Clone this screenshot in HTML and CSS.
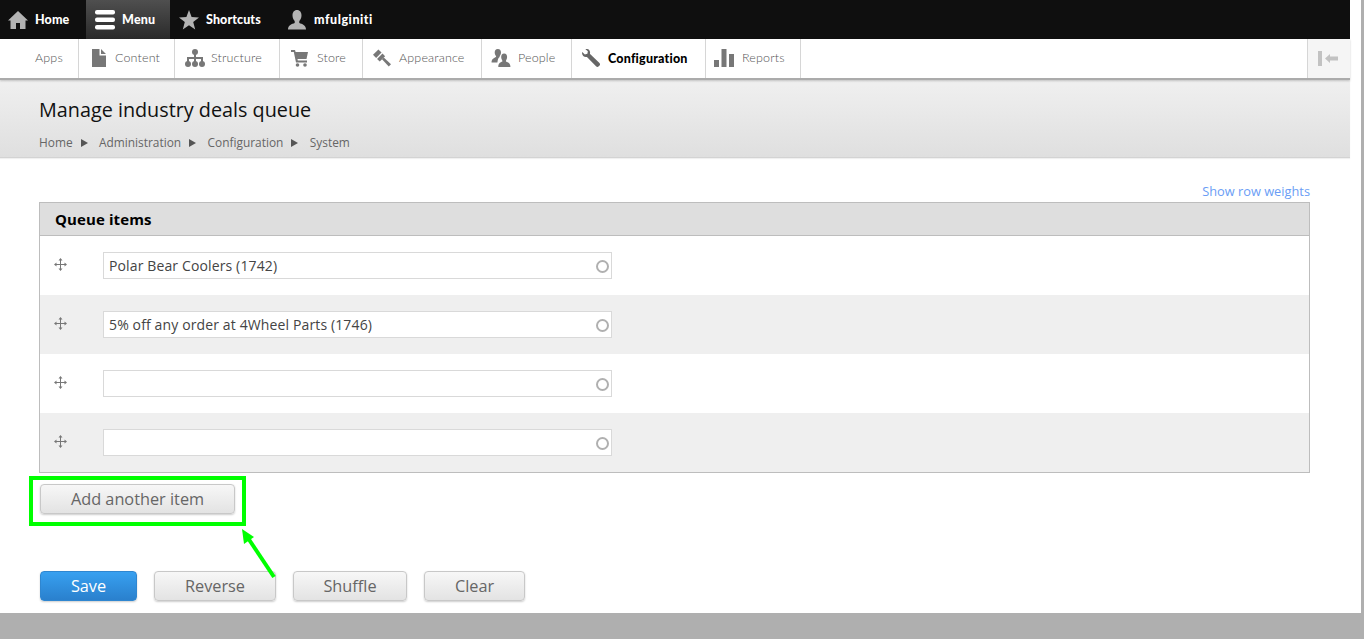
FILE: index.html
```html
<!DOCTYPE html>
<html lang="en">
<head>
<meta charset="utf-8">
<title>Manage industry deals queue</title>
<link rel="stylesheet" href="styles.css">
</head>
<body>
<div class="page">
  <div class="content">
    <nav class="topbar">
      <a class="top-item top-home"><svg class="top-icon" viewBox="0 0 20 20"><path d="M10 1 L20 10.5 L17.5 10.5 L17.5 19 L12 19 L12 13 L8 13 L8 19 L2.5 19 L2.5 10.5 L0 10.5 Z"/></svg>Home</a>
      <a class="top-item top-menu"><svg class="top-icon" viewBox="0 0 20 20"><rect y="0" width="20" height="4.500" rx="2" fill="#fff"/><rect y="7.500" width="20" height="4.500" rx="2" fill="#fff"/><rect y="15" width="20" height="4.500" rx="2" fill="#fff"/></svg>Menu</a>
      <a class="top-item top-shortcuts"><svg class="top-icon" viewBox="0 0 20 20"><path d="M10 0 L12.6 7 L20 7.4 L14.2 12 L16.2 19.5 L10 15.3 L3.8 19.5 L5.8 12 L0 7.4 L7.4 7 Z"/></svg>Shortcuts</a>
      <a class="top-item top-user"><svg class="top-icon" viewBox="0 0 20 20"><path d="M10 0 C13 0 14.5 2.4 14.5 5.5 C14.5 8 13.4 10 12.3 11 L12.3 13 C15 14 19 15 19 19.5 L1 19.5 C1 15 5 14 7.7 13 L7.7 11 C6.6 10 5.5 8 5.5 5.5 C5.5 2.4 7 0 10 0 Z"/></svg>mfulginiti</a>
    </nav>
    <nav class="tabs">
      <a class="tab tab-apps">Apps</a>
      <a class="tab tab-content"><svg class="tab-icon" viewBox="0 0 14 18"><path d="M0 0 H7.5 V6.5 H14 V18 H0 Z M9 0 L14 5 H9 Z"/></svg>Content</a>
      <a class="tab tab-structure"><svg class="tab-icon wide" viewBox="0 0 20 18"><circle cx="10" cy="3" r="3"/><path d="M9 5 H11 V8 H18 V13 H16 V10 H11 V13 H9 V10 H4 V13 H2 V8 H9 Z"/><circle cx="3" cy="15" r="3"/><circle cx="10" cy="15" r="3"/><circle cx="17" cy="15" r="3"/></svg>Structure</a>
      <a class="tab tab-store"><svg class="tab-icon wide" viewBox="0 0 20 18"><path d="M0 1 H4 L4.6 3 H17 L15.5 10 H6.5 L6.8 11.5 H16 V13.5 H5 L2.8 3 H0 Z"/><circle cx="6.5" cy="16" r="1.8"/><circle cx="14" cy="16" r="1.8"/></svg>Store</a>
      <a class="tab tab-appearance"><svg class="tab-icon wide" viewBox="0 0 20 20"><path d="M0 6.500 L6 0.500 L9.500 4 L3.500 10 Z"/><path d="M4.500 11 L10.500 5 L13.500 8 L7.500 14 Z"/><path d="M10 11.500 L12 9.500 L20 17 L17.500 19.500 Z"/></svg>Appearance</a>
      <a class="tab tab-people"><svg class="tab-icon wide" viewBox="0 0 21 20"><path d="M7 0 C9.5 0 10.5 2 10.5 4 C10.5 6 9.5 7 9 8 L9 9 C7.5 10 7 11.5 6.5 15 L0 15 C0 11 3 10 5 9 L5 8 C4.5 7 3.5 6 3.5 4 C3.5 2 4.5 0 7 0 Z"/><path d="M14 5 C16.3 5 17.3 7 17.3 9 C17.3 11 16.3 12 16 13 L16 14 C18 15 21 15.5 21 20 L7.5 20 C7.5 15.5 10 15 12 14 L12 13 C11.7 12 10.7 11 10.7 9 C10.7 7 11.7 5 14 5 Z"/></svg>People</a>
      <a class="tab tab-config is-active"><svg class="tab-icon wide" viewBox="0 0 20 20"><path d="M5 0 C7 -0.2 9 1.500 9 4 C9 4.500 8.900 5 8.700 5.400 L19.400 15.500 C20.300 16.400 20.200 17.500 19.500 18.400 L18.600 19.300 C17.700 20.200 16.500 20.200 15.600 19.300 L5.500 8.800 C3 9.700 0 7.500 0 4.500 C0 4 0.100 3.600 0.200 3.200 L3.200 6 L6 5.200 L6.500 2.500 L3.800 0.200 C4.200 0.100 4.600 0 5 0 Z"/></svg>Configuration</a>
      <a class="tab tab-reports"><svg class="tab-icon wide" viewBox="0 0 20 18"><rect y="11" width="5" height="7"/><rect x="7.500" width="5" height="18"/><rect x="15" y="5" width="5" height="13"/></svg>Reports</a>
      <span class="tab-fill"></span>
      <a class="tab-toggle" aria-label="Collapse"><svg viewBox="0 0 20 15" width="20" height="15"><rect width="4" height="15"/><path d="M7 7.500 L12 3 V5.500 H20 V9.500 H12 V12 Z"/></svg></a>
    </nav>
    <header class="page-header">
      <h1 class="page-title">Manage industry deals queue</h1>
      <ol class="crumbs">
        <li>Home</li><li>Administration</li><li>Configuration</li><li>System</li>
      </ol>
    </header>
    <main class="main">
      <div class="weights-row"><a class="weights-link">Show row weights</a></div>
      <section class="queue">
        <h2 class="queue-head">Queue items</h2>
        <div class="queue-row">
          <svg class="handle" viewBox="0 0 13 13"><path d="M6.500 0 L8.500 2.500 H7 V5.900 H10.500 V4.500 L13 6.500 L10.500 8.500 V7.100 H7 V10.500 H8.500 L6.500 13 L4.500 10.500 H6 V7.100 H2.500 V8.500 L0 6.500 L2.500 4.500 V5.900 H6 V2.500 H4.500 Z"/></svg>
          <div class="field"><span class="field-text">Polar Bear Coolers (1742)</span><i class="throbber"></i></div>
        </div>
        <div class="queue-row even">
          <svg class="handle" viewBox="0 0 13 13"><path d="M6.500 0 L8.500 2.500 H7 V5.900 H10.500 V4.500 L13 6.500 L10.500 8.500 V7.100 H7 V10.500 H8.500 L6.500 13 L4.500 10.500 H6 V7.100 H2.500 V8.500 L0 6.500 L2.500 4.500 V5.900 H6 V2.500 H4.500 Z"/></svg>
          <div class="field"><span class="field-text">5% off any order at 4Wheel Parts (1746)</span><i class="throbber"></i></div>
        </div>
        <div class="queue-row">
          <svg class="handle" viewBox="0 0 13 13"><path d="M6.500 0 L8.500 2.500 H7 V5.900 H10.500 V4.500 L13 6.500 L10.500 8.500 V7.100 H7 V10.500 H8.500 L6.500 13 L4.500 10.500 H6 V7.100 H2.500 V8.500 L0 6.500 L2.500 4.500 V5.900 H6 V2.500 H4.500 Z"/></svg>
          <div class="field"><span class="field-text"></span><i class="throbber"></i></div>
        </div>
        <div class="queue-row even">
          <svg class="handle" viewBox="0 0 13 13"><path d="M6.500 0 L8.500 2.500 H7 V5.900 H10.500 V4.500 L13 6.500 L10.500 8.500 V7.100 H7 V10.500 H8.500 L6.500 13 L4.500 10.500 H6 V7.100 H2.500 V8.500 L0 6.500 L2.500 4.500 V5.900 H6 V2.500 H4.500 Z"/></svg>
          <div class="field"><span class="field-text"></span><i class="throbber"></i></div>
        </div>
      </section>
      <div class="add-row"><button class="btn btn-add">Add another item</button></div>
      <div class="actions">
        <button class="btn btn-primary btn-save">Save</button>
        <button class="btn btn-reverse">Reverse</button>
        <button class="btn btn-shuffle">Shuffle</button>
        <button class="btn btn-clear">Clear</button>
      </div>
    </main>
  </div>
  <footer class="bottom"></footer>
  <div class="edge"></div>
  <svg class="annotation" width="1364" height="639" viewBox="0 0 1364 639">
    <rect x="31" y="478" width="213" height="46" fill="none" stroke="#00ff00" stroke-width="4"/>
    <path d="M274 577 L248 538" fill="none" stroke="#00ff00" stroke-width="4"/>
    <path d="M242 529 L254 537 L244 544 Z" fill="#00ff00"/>
  </svg>
</div>
</body>
</html>
```
FILE: styles.css
```css
* { box-sizing: border-box; }
html, body { margin: 0; padding: 0; background: #fff; }
body { font-family: "Open Sans", sans-serif; overflow: hidden; }
.page { position: relative; width: 1364px; height: 639px; display: flex; flex-direction: column; overflow: hidden; }
.content { width: 1350px; height: 613px; flex: none; }

.topbar { height: 39px; background: #0f0f0f; display: flex; }
.top-item { display: flex; align-items: center; height: 39px; color: #fff; font-family: Lato, sans-serif; font-weight: 900; font-size: 12.500px; }
.top-icon { width: 20px; height: 20px; fill: #b3b3b3; flex: none; }
.top-home { width: 86px; padding-left: 8px; gap: 7px; letter-spacing: .1px; }
.top-menu { width: 84px; padding-left: 9px; gap: 7px; letter-spacing: .2px; background: linear-gradient(#4f4f4f, #2a2a2a); }
.top-shortcuts { width: 109px; padding-left: 9px; gap: 7px; letter-spacing: .1px; }
.top-user { padding-left: 8px; gap: 7px; letter-spacing: .55px; }

.tabs { height: 41px; display: flex; background: #fff; border-bottom: 2px solid #ababab; box-shadow: 0 1px 2px rgba(0,0,0,.2); position: relative; }
.tab { display: flex; align-items: center; height: 39px; padding-bottom: 2px; border-right: 1px solid #d6d6d6; color: #555; font-family: Lato, sans-serif; font-weight: 300; font-size: 12.500px; letter-spacing: .15px; flex: none; }
.tab-icon { height: 18px; width: 14px; fill: #777; flex: none; }
.tab-icon.wide { width: 20px; }
.tab-apps { width: 79px; padding-left: 35px; }
.tab-content { width: 96px; padding-left: 13px; gap: 9px; }
.tab-structure { width: 105px; padding-left: 10px; gap: 6px; }
.tab-store { width: 83px; padding-left: 11px; gap: 6px; }
.tab-appearance { width: 119px; padding-left: 9px; gap: 7px; }
.tab-people { width: 90px; padding-left: 9px; gap: 7px; }
.tab-config { width: 134px; padding-left: 9px; gap: 7px; }
.tab-reports { width: 95px; padding-left: 8px; gap: 8px; }
.tab.is-active { color: #000; font-weight: 900; font-size: 12.500px; letter-spacing: .2px; padding-bottom: 1px; }
.is-active .tab-icon { fill: #666; }
.tab-fill { flex: 1; }
.tab-toggle { width: 43px; height: 39px; background: #f5f5f5; border-left: 1px solid #d6d6d6; display: flex; align-items: center; justify-content: center; padding-right: 2px; }
.tab-toggle svg { fill: #c2c2c2; }

.page-header { height: 78px; padding: 18px 39px 0; background: linear-gradient(#f0f0f0, #dfdfdf); border-bottom: 1px solid #d3d3d3; box-shadow: 0 1px 1px rgba(0,0,0,.06); }
.page-title { margin: 0; font-size: 19.800px; font-weight: 400; line-height: 24px; color: #111; }
.crumbs { list-style: none; margin: 12px 0 0; padding: 0; display: flex; font-size: 11.900px; line-height: 16px; color: #666; }
.crumbs li + li::before { content: ""; display: inline-block; width: 0; height: 0; margin: 0 11.400px 0 8px; border-left: 7px solid #555; border-top: 4px solid transparent; border-bottom: 4px solid transparent; vertical-align: 0; }

.main { padding: 0 40px 0 39px; }
.weights-row { height: 44px; padding-top: 24px; text-align: right; }
.weights-link { color: #6a9df5; font-size: 12.800px; line-height: 18px; display: block; }

.queue { border: 1px solid #bdbdbd; border-top-width: 1px; height: 271px; background: #fff; }
.queue-head { margin: 0; height: 33px; background: #dedede; border-bottom: 1px solid #bdbdbd; padding-left: 15px; font-size: 15px; letter-spacing: .1px; font-weight: 700; line-height: 33px; color: #000; }
.queue-row { height: 59px; display: flex; align-items: flex-start; padding: 16px 0 0 14px; }
.queue-row.even { background: #efefef; }
.handle { width: 13px; height: 13px; fill: #777; margin-top: 6px; flex: none; }
.field { width: 509px; height: 27px; margin-left: 36px; background: #fff; border: 1px solid #d9d9d9; display: flex; align-items: center; justify-content: space-between; padding: 0 2px 0 5px; }
.field-text { font-size: 14px; letter-spacing: .13px; line-height: 25px; color: #444; white-space: nowrap; }
.throbber { width: 13px; height: 13px; border: 2px solid #b0b0b0; border-radius: 50%; margin-top: 2px; }

.btn { display: block; height: 30px; padding: 0; border: 1px solid #c8c8c8; border-radius: 4px; background: linear-gradient(#f7f7f7, #e3e3e3); box-shadow: 0 1px 2px rgba(0,0,0,.2); color: #666; font-family: "Open Sans", sans-serif; font-size: 16.300px; line-height: 28px; text-align: center; }
.add-row { padding: 11px 0 0 1px; }
.btn-add { width: 195px; }
.actions { display: flex; padding: 57px 0 0 1px; }
.btn-primary { background: linear-gradient(#38a0f0, #2a80cd); border-color: #2f86d0; color: #fff; }
.btn-save { width: 97px; margin-right: 17px; }
.btn-reverse { width: 122px; margin-right: 17px; }
.btn-shuffle { width: 114px; margin-right: 17px; }
.btn-clear { width: 101px; }

.bottom { height: 26px; background: #afafaf; flex: none; }
.edge { position: absolute; right: 0; top: 0; width: 3px; height: 613px; background: #afafaf; }
.annotation { position: absolute; left: 0; top: 0; pointer-events: none; }
```
